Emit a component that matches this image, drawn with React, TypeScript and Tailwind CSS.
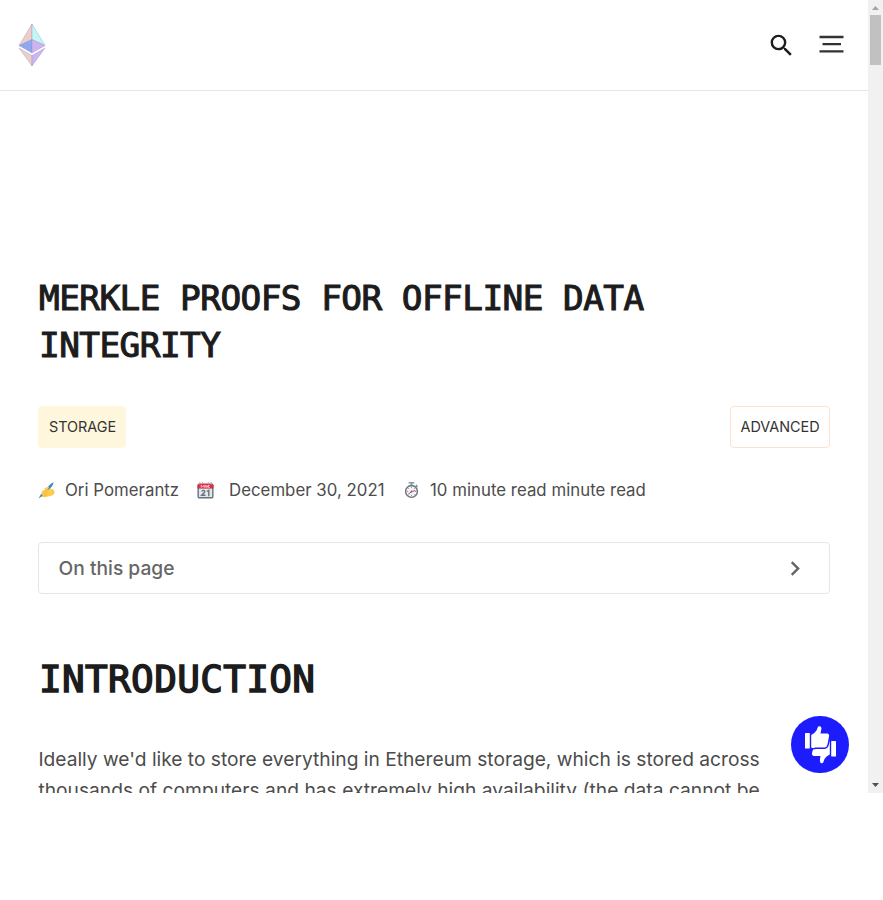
import React from "react";
import { MdSearch, MdChevronRight } from "react-icons/md";

function EthLogo() {
  return (
    <svg width="28" height="44" viewBox="0 0 28 44" stroke="#8f86cf" strokeWidth="0.35" strokeLinejoin="round">
      <path d="M14 1 1 22.500 14 16.500z" fill="#edcfc9" />
      <path d="M14 1 27 22.500 14 16.500z" fill="#c3f7f2" />
      <path d="M14 16.500 1 22.500 14 30z" fill="#8fa8ee" />
      <path d="M14 16.500 27 22.500 14 30z" fill="#ccb5ee" />
      <path d="M1 25 14 32.500V43z" fill="#edcfc9" />
      <path d="M27 25 14 32.500V43z" fill="#ccb5f3" />
    </svg>
  );
}

function WritingHand() {
  return (
    <svg width="17" height="17" viewBox="0 0 36 36">
      <path d="M14 18 26 5Q31 0 33 1Q32 7 28 11L20 20z" fill="#4289c1" />
      <path d="M12 14Q17 12 21 10Q25 10 22 14L19 18 26 14Q34 15 35 21Q36 27 28 29L17 32Q9 33 6 29Q4 26 9 24Q5 22 9 19L17 16z" fill="#ffcc4d" />
      <path d="M11 20 19 18M11 25 20 22M13 29 20 27" stroke="#f0a93a" strokeWidth="1.500" fill="none" />
      <path d="M7 25 1 35 10 29z" fill="#4289c1" />
    </svg>
  );
}

function CalendarIcon() {
  return (
    <svg width="17" height="17" viewBox="0 0 36 36">
      <rect x="1" y="4" width="34" height="31" rx="4" fill="#66757f" />
      <path d="M4 13H32V31Q32 32 31 32H5Q4 32 4 31z" fill="#e1e8ed" />
      <path d="M1 14V7Q1 3 5 3H31Q35 3 35 7V14z" fill="#dd2e44" />
      <path d="M6 0V6M12 0V4M24 0V4M30 0V6" stroke="#99aab5" strokeWidth="2" />
      <path d="M9 12V7L12 10 15 7V12M17 12V8H20V12M23 12V7H26L23 10 27 12" stroke="#fff" strokeWidth="1.500" fill="none" />
      <path d="M10 20Q11 17 15 18Q18 20 15 23L10 28H18M21 20 25 18V30" stroke="#66757f" strokeWidth="3" fill="none" />
    </svg>
  );
}

function StopwatchIcon() {
  return (
    <svg width="17" height="17" viewBox="0 0 36 36">
      <path d="M12 0H24V3H20V7H16V3H12zM28 5 32 9 29 12 26 9z" fill="#8899a6" />
      <circle cx="18" cy="20" r="12.500" fill="#f5f8fa" stroke="#66757f" strokeWidth="3" />
      <path d="M18 10V13M18 27V30M8 20H11M25 20H28M11 13 13 15M25 13 23 15M25 27 23 25" stroke="#66757f" strokeWidth="1.500" />
      <path d="M26 18 19 20 11 26" stroke="#dd2e44" strokeWidth="2" fill="none" />
      <circle cx="18" cy="20" r="2.200" fill="#66757f" />
    </svg>
  );
}

function ThumbsIcon() {
  return (
    <svg width="32" height="38" viewBox="0 0 32 38" fill="#fff">
      <rect x="0" y="7" width="4.800" height="15.500" rx="0.500" />
      <path d="M6.200 9Q10 7 11.500 4.500L13 .8Q14 -.3 15.500 .5Q17 1.500 16 5L15.500 7.500H22.500Q24.700 8 24 10.500L22.500 18.500Q22 21 19.500 21.500H10Q8 22.500 6.200 21.500z" />
      <rect x="26.200" y="15" width="4.800" height="15.500" rx="0.500" />
      <path d="M24.800 14.500V28.500Q21 30 19.500 33L18.200 36.500Q17 38 15.500 36.800Q14.500 36 15 33L15.500 30H8.500Q6.500 29.500 7 27L8 23.500Q10 23 11 23H19.500Q23 22.500 23.800 19z" />
    </svg>
  );
}

export default function App() {
  return (
    <div className="flex h-[793px] w-[883px] overflow-hidden bg-white font-['Inter',sans-serif] text-[#4c4c4c]">
      <div className="relative w-[868px] overflow-hidden">
        <header className="flex h-[91px] items-center justify-between border-b border-[#e5e5e5] pr-[23px] pl-[18.400px]">
          <EthLogo />
          <div className="flex items-center text-[#1c1c1c]">
            <MdSearch size={29} />
            <svg className="ml-[23px]" width="26" height="20" viewBox="0 0 26 20" stroke="#333" strokeWidth="2.300">
              <path d="M.5 2H24.500M3.500 9.200H22M.5 16.400H24.500" />
            </svg>
          </div>
        </header>
        <main className="px-[38px]">
          <h1 className="mt-[184px] h-[94px] pl-px font-['DejaVu_Sans_Mono',monospace] text-[34.400px] leading-[47px] font-normal tracking-[-0.550px] whitespace-nowrap text-[#1c1c1c] [-webkit-text-stroke:1.1px_#1c1c1c]">
            MERKLE PROOFS FOR OFFLINE DATA
            <br />
            INTEGRITY
          </h1>
          <div className="mt-[37px] flex justify-between text-[14.400px] text-[#333]">
            <span className="flex h-[42px] w-[88px] items-center justify-center rounded bg-[#fff6de] pl-px">STORAGE</span>
            <span className="flex h-[42px] w-[100px] items-center justify-center rounded border border-[#ffe0d0]">ADVANCED</span>
          </div>
          <div className="mt-[30px] flex h-[25px] items-center text-[16.800px] leading-[25px] tracking-[0.030px] whitespace-nowrap">
            <WritingHand />
            <span className="ml-[10px] w-[132px]">Ori Pomerantz</span>
            <CalendarIcon />
            <span className="ml-[15px] w-[174px]">December 30, 2021</span>
            <StopwatchIcon />
            <span className="ml-[10px]">10 minute read minute read</span>
          </div>
          <div className="mt-[39px] flex h-[52px] items-center justify-between rounded border border-[#e5e5e5] pr-5 pl-[19.600px] text-[19.200px] font-medium text-[#666]">
            <span>On this page</span>
            <MdChevronRight className="translate-x-[0.5px]" size={29} />
          </div>
          <h2 className="mt-[58px] h-[54px] pl-px font-['DejaVu_Sans_Mono',monospace] text-[37.700px] leading-[54px] font-normal tracking-[0.340px] text-[#1c1c1c] [-webkit-text-stroke:1.5px_#1c1c1c]">
            INTRODUCTION
          </h2>
          <p className="mt-[38px] pl-[0.400px] text-[19.200px] leading-[30.700px] whitespace-nowrap">
            Ideally we'd like to store everything in Ethereum storage, which is stored across
            <br />
            <span className="tracking-[0.015px]">thousands of computers and has extremely high availability (the data cannot be</span>
          </p>
        </main>
        <button className="absolute top-[716px] left-[791px] flex h-[57px] w-[58px] items-center justify-center rounded-full bg-[#1c1cff] pl-px">
          <ThumbsIcon />
        </button>
      </div>
      <div className="flex w-[15px] flex-col items-center justify-between bg-[#f1f1f1]">
        <div className="flex flex-col items-center">
          <svg width="15" height="15" viewBox="0 0 15 15"><path d="M4 10 7.500 6 11 10z" fill="#a3a3a3" /></svg>
          <div className="h-[50px] w-[11px] bg-[#c1c1c1]" />
        </div>
        <svg width="15" height="15" viewBox="0 0 15 15"><path d="M4 5 7.500 9 11 5z" fill="#505050" /></svg>
      </div>
    </div>
  );
}
